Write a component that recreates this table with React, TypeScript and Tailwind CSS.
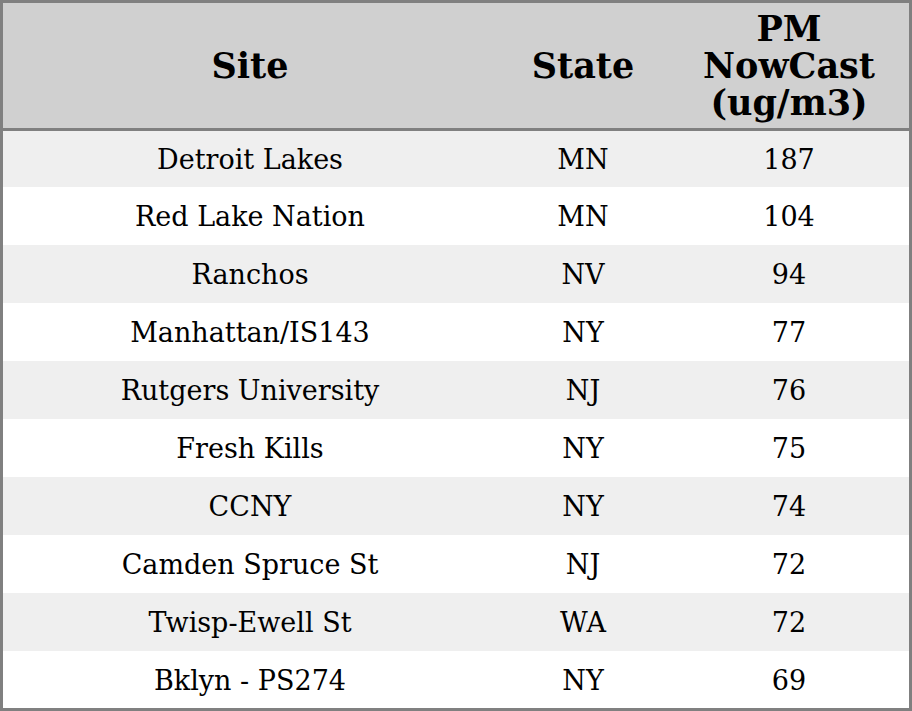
import React from 'react';

const rows: [string, string, string][] = [
  ['Detroit Lakes', 'MN', '187'],
  ['Red Lake Nation', 'MN', '104'],
  ['Ranchos', 'NV', '94'],
  ['Manhattan/IS143', 'NY', '77'],
  ['Rutgers University', 'NJ', '76'],
  ['Fresh Kills', 'NY', '75'],
  ['CCNY', 'NY', '74'],
  ['Camden Spruce St', 'NJ', '72'],
  ['Twisp-Ewell St', 'WA', '72'],
  ['Bklyn - PS274', 'NY', '69'],
];

const App: React.FC = () => {
  return (
    <div
      className="w-[912px] h-[711px] border-[3px] border-[#808080] bg-white text-black flex flex-col"
      style={{ fontFamily: '"DejaVu Serif", serif' }}
    >
      {/* Header */}
      <div className="grid grid-cols-[494px_172px_240px] h-[128px] bg-[#d0d0d0] border-b-[3px] border-[#808080] font-bold text-[35px] leading-[37px] shrink-0">
        <div className="flex items-center justify-center text-center">Site</div>
        <div className="flex items-center justify-center text-center">State</div>
        <div className="flex items-center justify-center text-center">
          PM
          <br />
          NowCast
          <br />
          (ug/m3)
        </div>
      </div>

      {/* Rows */}
      <div className="flex-1 flex flex-col">
        {rows.map(([site, state, pm], i) => (
          <div
            key={site}
            className={`grid grid-cols-[494px_172px_240px] items-center text-center text-[27px] pt-[3px] ${
              i === 0 ? 'h-[56px]' : i === rows.length - 1 ? 'flex-1' : 'h-[58px]'
            } ${i % 2 === 0 ? 'bg-[#efefef]' : 'bg-white'}`}
          >
            <div>{site}</div>
            <div>{state}</div>
            <div>{pm}</div>
          </div>
        ))}
      </div>
    </div>
  );
};

export default App;
